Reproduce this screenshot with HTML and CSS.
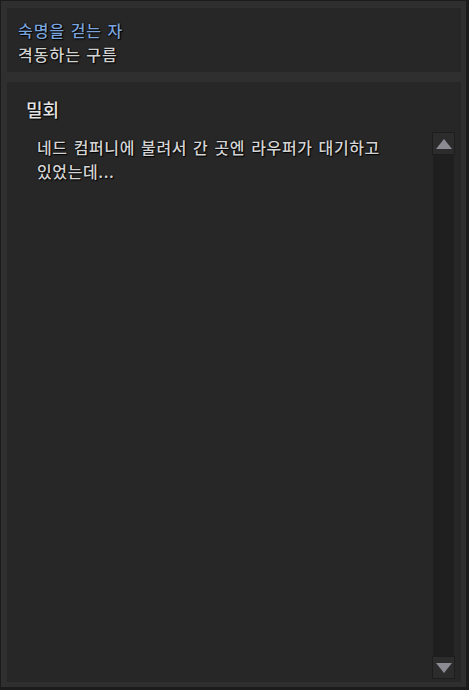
FILE: index.html
```html
<!DOCTYPE html>
<html lang="ko">
<head>
    <meta charset="UTF-8">
    <title>밀회</title>
    <link rel="stylesheet" href="styles.css">
</head>
<body>
<div class="frame">
    <div class="panel head">
        <div class="source">숙명을 걷는 자</div>
        <div class="sub">격동하는 구름</div>
    </div>
    <div class="panel story">
        <div class="main">
            <h2 class="title">밀회</h2>
            <p class="text">네드 컴퍼니에 불려서 간 곳엔 라우퍼가 대기하고 있었는데...</p>
        </div>
        <div class="scroll">
            <div class="btn"><span class="arrow up"></span></div>
            <div class="track"></div>
            <div class="btn"><span class="arrow down"></span></div>
        </div>
    </div>
</div>
</body>
</html>
```

FILE: styles.css
```css
html, body {
    margin: 0;
    padding: 0;
    background: #1b1b1b;
}

body {
    padding: 1px 3px 3px 1px;
    font-family: "Noto Sans CJK KR", "Noto Sans", sans-serif;
}

.frame {
    width: 465px;
    height: 686px;
    box-sizing: border-box;
    padding: 7px 5px 5px 6px;
    background: #2f2f2f;
    display: flex;
    flex-direction: column;
    gap: 10px;
}

.panel {
    background: #272727;
}

.head {
    height: 64px;
    box-sizing: border-box;
    padding: 10px 11px 0;
    font-size: 16px;
    font-weight: 500;
    line-height: 24px;
    letter-spacing: 1px;
    text-shadow: 0 0 2px #000, 1px 1px 1px #000;
}

.source {
    color: #7ba3dc;
}

.sub {
    color: #d2d2d2;
}

.story {
    flex: 1;
    display: flex;
}

.main {
    flex: 1;
    padding: 15px 0 0 19px;
}

.title {
    margin: 0;
    font-size: 18px;
    font-weight: 500;
    line-height: 24px;
    color: #e2e2e2;
    text-shadow: 0 0 2px #000, 1px 1px 1px #000;
}

.text {
    margin: 14px 0 0 11px;
    width: 370px;
    font-size: 16px;
    font-weight: 500;
    line-height: 24px;
    color: #d4d4d4;
    letter-spacing: 0.6px;
    word-spacing: 1px;
    word-break: keep-all;
    text-shadow: 0 0 2px #000, 1px 1px 1px #000;
}

.scroll {
    width: 23px;
    margin: 50px 6px 3px 0;
    display: flex;
    flex-direction: column;
}

.btn {
    height: 23px;
    box-sizing: border-box;
    border: 1px solid #1d1d1d;
    background: #2c2c2c;
    display: flex;
    align-items: center;
    justify-content: center;
}

.track {
    flex: 1;
    margin: 0 1px;
    background: #1f1f1f;
}

.arrow {
    width: 0;
    height: 0;
    border-left: 8px solid transparent;
    border-right: 8px solid transparent;
}

.arrow.up {
    border-bottom: 10px solid #8c8a93;
}

.arrow.down {
    border-top: 10px solid #8c8a93;
}
```
